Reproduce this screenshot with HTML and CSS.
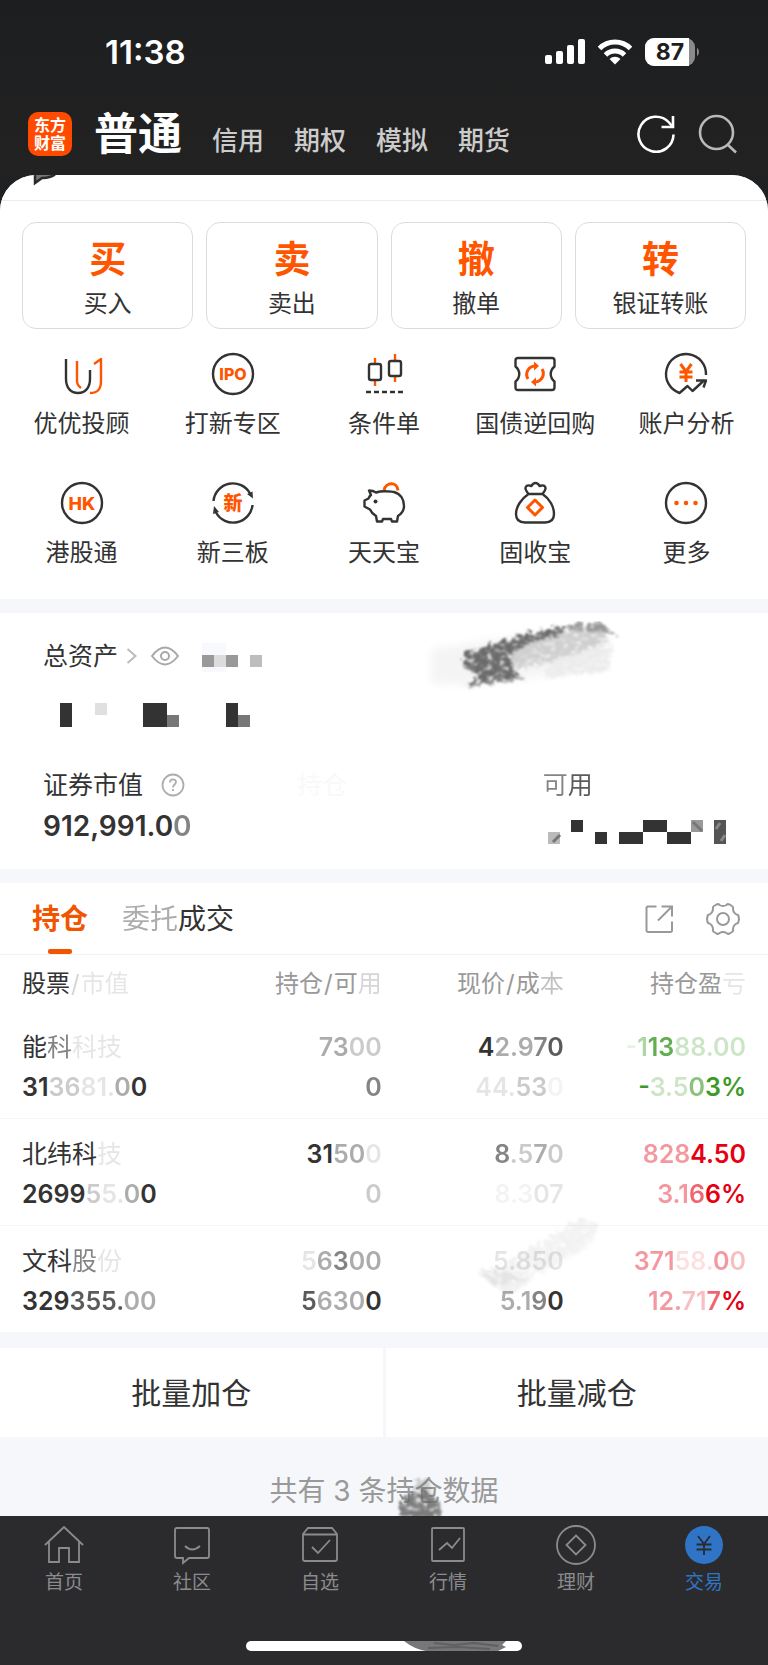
FILE: index.html
```html
<!DOCTYPE html>
<html lang="zh-CN">
<head>
<meta charset="utf-8">
<meta name="viewport" content="width=device-width, initial-scale=1">
<title>交易</title>
<link rel="stylesheet" href="styles.css">
</head>
<body>
<div class="app">
  <header class="top">
    <div class="status">
      <span class="clock">11:38</span>
      <div class="status-icons">
        <svg width="40" height="26" viewBox="0 0 40 26" fill="#fff"><rect x="0" y="16" width="7" height="9" rx="2"/><rect x="11" y="12" width="7" height="13" rx="2"/><rect x="22" y="6" width="7" height="19" rx="2"/><rect x="33" y="0" width="7" height="25" rx="2"/></svg>
        <svg width="36" height="26" viewBox="0 0 36 26" fill="none" stroke="#fff" stroke-width="5"><path d="M2.500 9.500a22 22 0 0 1 31 0"/><path d="M8.500 16a13.500 13.500 0 0 1 19 0"/><path d="M18 25.500l-5.500-5.600a8 8 0 0 1 11 0z" fill="#fff" stroke="none"/></svg>
        <svg width="56" height="28" viewBox="0 0 56 28"><rect width="50" height="28" rx="9" fill="#8a8a8c"/><path d="M9 0h35v28H9a9 9 0 0 1-9-9V9a9 9 0 0 1 9-9z" fill="#fff"/><path d="M52 9.500q4 4.500 0 9z" fill="#8a8a8c"/><text class="battery-text" x="25" y="22" text-anchor="middle">87</text></svg>
      </div>
    </div>
    <div class="brand-row">
      <div class="logo">东方<br>财富</div>
      <nav class="accounts">
        <a class="account account-on" href="#">普通</a>
        <a class="account" href="#">信用</a>
        <a class="account" href="#">期权</a>
        <a class="account" href="#">模拟</a>
        <a class="account" href="#">期货</a>
      </nav>
      <div class="top-actions">
        <button class="icon-btn" type="button" aria-label="刷新"><svg width="40" height="40" viewBox="0 0 40 40" fill="none" stroke="#fff" stroke-width="2.600"><path d="M37.500 20.500A17.500 17.500 0 1 1 33 8.500L36 12"/><path d="M37 2v11H25.500"/></svg></button>
        <button class="icon-btn" type="button" aria-label="搜索"><svg width="40" height="40" viewBox="0 0 40 40" fill="none" stroke="#b9b9ba" stroke-width="2.600"><circle cx="18.500" cy="18.500" r="16.500"/><path d="M29.500 30.500l8.500 8"/></svg></button>
      </div>
    </div>
  </header>

  <main class="sheet">
    <div class="notice"><svg width="26" height="12" viewBox="0 0 26 12"><path d="M2 0v8l7-5q7 .5 13-3.500" fill="#77777a" stroke="#2b2b2d" stroke-width="2.500"/></svg></div>

    <section class="trade">
      <div class="cards">
        <button class="card" type="button"><span class="card-mark">买</span><span class="card-label">买入</span></button>
        <button class="card" type="button"><span class="card-mark">卖</span><span class="card-label">卖出</span></button>
        <button class="card" type="button"><span class="card-mark">撤</span><span class="card-label">撤单</span></button>
        <button class="card" type="button"><span class="card-mark">转</span><span class="card-label">银证转账</span></button>
      </div>
      <div class="tools">
        <a class="tool" href="#"><svg class="glyph" viewBox="0 0 42 42"><path d="M5 6v20c0 9 5 14 12 14s12-5 12-14v-9"/><path class="hot" d="M16 8v20c0 3 1 5 4 7"/><path class="hot" d="M33 11l7-5v22c0 8-3 12-11 12"/></svg><span>优优投顾</span></a>
        <a class="tool" href="#"><svg class="glyph" viewBox="0 0 42 42"><circle cx="21" cy="21" r="20"/><text class="glyph-text" x="21" y="27" text-anchor="middle">IPO</text></svg><span>打新专区</span></a>
        <a class="tool" href="#"><svg class="glyph" viewBox="0 0 42 42"><path class="hot" d="M12 5v6M12 27v6M32 1v7M32 23v6"/><rect x="6" y="11" width="12" height="16" rx="2"/><rect x="26" y="8" width="12" height="15" rx="2"/><path d="M3 39h37" stroke-dasharray="5 3"/></svg><span>条件单</span></a>
        <a class="tool" href="#"><svg class="glyph" viewBox="0 0 42 42"><path d="M4 5h34q2.500 0 2.500 2.500v6c-5 4-5 11 0 15v6q0 2.500-2.500 2.500H4q-2.500 0-2.500-2.500v-6c5-4 5-11 0-15v-6Q1.500 5 4 5z"/><path class="hot" d="M14 26A8.500 8.500 0 0 1 21 13h2M28 16A8.500 8.500 0 0 1 21 29h-2" stroke-width="3"/><path class="hot-fill" d="M20 8.500l5 4.500-5 4.500zM22 24.500l-5 4.500 5 4.500z"/></svg><span>国债逆回购</span></a>
        <a class="tool" href="#"><svg class="glyph" viewBox="0 0 42 42"><path d="M41 22A20 20 0 1 0 14.500 40l8-7 5 5 12-11M31 27.500h10l-2.500 7"/><path class="hot" d="M15.500 11l5.500 7.500 5.500-7.500M21 18.500V29M14.500 19h13M14.500 24h13" stroke-width="3"/></svg><span>账户分析</span></a>
        <a class="tool" href="#"><svg class="glyph" viewBox="0 0 42 42"><circle cx="21" cy="21" r="20"/><text class="glyph-text glyph-hk" x="21" y="28" text-anchor="middle">HK</text></svg><span>港股通</span></a>
        <a class="tool" href="#"><svg class="glyph" viewBox="0 0 42 42"><path d="M1.500 19A19.500 19.500 0 0 1 38 11.500M40.500 23A19.500 19.500 0 0 1 4 30.500"/><path class="ink-fill" d="M35 12l5.500-2.500.5 7zM7 30l-6 2 1-8z"/><text class="glyph-text glyph-new" x="21" y="28" text-anchor="middle">新</text></svg><span>新三板</span></a>
        <a class="tool" href="#"><svg class="glyph" viewBox="0 0 42 42"><path class="hot" d="M21 8c2-8 13-9 14 .500" stroke-width="3"/><path d="M6 8.500q4 0 7 2c7-2.500 13-1 18-.5 7 2 10 8 10 14 0 4-3 8-6 10l-1 5.500h-5l-1-2.500h-8l-1 2.500h-5l-1-5.500c-3-2-5-4-6-6.500l-5.500-3v-6l4-2q1-2.500 2.500-3.500z"/><circle class="ink-fill" cx="12.500" cy="19.500" r="2"/></svg><span>天天宝</span></a>
        <a class="tool" href="#"><svg class="glyph" viewBox="0 0 42 42"><path d="M14.500 12c-3-4-4-6-2-8 2-1.500 4 0 5 0 2-4 6-4 8 0 1 0 3-1.500 5 0 2 2 1 4-2 8zM14.500 12C7 17 2 25 2 32c0 6 3 8.500 9 8.500h20c6 0 9-2.500 9-8.500 0-7-4-15-11.500-20"/><path class="hot" d="M21 18l7.500 7.500-7.500 7.500-7.500-7.500z" stroke-width="3"/></svg><span>固收宝</span></a>
        <a class="tool" href="#"><svg class="glyph" viewBox="0 0 42 42"><circle cx="21" cy="21" r="20"/><g class="hot-fill"><circle cx="11.500" cy="21" r="2.300"/><circle cx="21" cy="21" r="2.300"/><circle cx="30.500" cy="21" r="2.300"/></g></svg><span>更多</span></a>
      </div>
    </section>

    <section class="assets">
      <div class="asset-head">
        <a class="asset-title" href="#">总资产<svg width="12" height="18" viewBox="0 0 12 18" fill="none" stroke="#bcbcbc" stroke-width="2"><path d="M1.500 2l8 7-8 7"/></svg></a>
        <button class="icon-btn" type="button" aria-label="显示或隐藏"><svg width="28" height="20" viewBox="0 0 28 20" fill="none" stroke="#a8a8a8" stroke-width="2"><path d="M1 10Q14-7 27 10 14 27 1 10z"/><circle cx="14" cy="10" r="4"/></svg></button>
        <svg class="mosaic-small" width="60" height="32" viewBox="0 0 60 32"><path fill="#f8f9fc" d="M0 3h24v29H0z"/><path fill="#999" d="M0 15h12v12H0zM24 15h12v12H24z"/><path fill="#dcdcde" d="M12 15h12v12H12z"/><path fill="#bdbdbd" d="M48 15h12v12H48z"/></svg>
      </div>
      <svg class="mosaic" width="210" height="24" viewBox="0 0 210 24"><path fill="#333" d="M17 0h12v24H17zM100 0h24v24h-24zM183 0h12v24h-12z"/><path fill="#777" d="M124 12h12v12h-12zM195 12h12v12h-12z"/><path fill="#e0e0e0" d="M52 0h12v12H52z"/></svg>
      <div class="asset-grid">
        <div class="asset">
          <span class="asset-label">证券市值<svg width="24" height="24" viewBox="0 0 24 24" fill="none" stroke="#adadad" stroke-width="1.800"><circle cx="12" cy="12" r="10.500"/><path d="M9 9.500c0-4 6-4 6-.5 0 2.500-3 2.500-3 5.500M12 16v2"/></svg></span>
          <strong class="asset-value">912,991.0<span class="s2">0</span></strong>
        </div>
        <div class="asset"><span class="asset-label ghost">持仓</span></div>
        <div class="asset">
          <span><span class="s2">可</span><span class="s1">用</span></span>
          <svg class="mosaic-cash" width="184" height="24" viewBox="0 0 184 24"><path fill="#333" d="M28 0h12v12H28zM52 12h12v12H52zM76 12h24v12H76zM100 0h24v12h-24zM124 12h24v12h-24z"/><path fill="#bbb" d="M5 12h12v12H5z"/><path fill="#999" d="M148 0h12v12h-12z"/><path fill="#555" d="M171 0h12v24h-12z"/><path d="M10 22l7-7M150 2l9 9" stroke="#777" stroke-width="3"/><path d="M173 9l4-6M178 21l4-6" stroke="#888" stroke-width="3"/></svg>
        </div>
      </div>
      <svg class="smear smear-assets" width="210" height="80" viewBox="0 0 210 80">
        <defs>
          <filter id="chalk" x="-10%" y="-10%" width="120%" height="120%"><feTurbulence type="fractalNoise" baseFrequency=".16 .24" numOctaves="3" seed="4" result="n"/><feDisplacementMap in="SourceGraphic" in2="n" scale="12" result="d"/><feColorMatrix in="n" type="matrix" values="0 0 0 0 0 0 0 0 0 0 0 0 0 0 0 0 0 0 3 -.55" result="m"/><feComposite in="d" in2="m" operator="in"/><feGaussianBlur stdDeviation=".8"/></filter>
          <filter id="haze" x="-10%" y="-20%" width="120%" height="140%"><feGaussianBlur stdDeviation="4"/></filter>
        </defs>
        <path filter="url(#haze)" fill="#f4f4f4" d="M12 28l48-7 60-9 70 0-6 32-70 12-60 8-42-2z"/>
        <g filter="url(#chalk)"><path fill="#cfcfcf" d="M64 34l80-23 40-2 6 12-46 18-78 16z"/><path fill="#ececec" d="M136 38l58-14-4 26-66 8z"/><path fill="#6a6a6a" d="M46 32l54-17 50-11-10 12-34 8-14 14 4 12 10 8-58 8 12-12-16-8z"/><path fill="#999" d="M148 4l34-2 18 14-14-4-36-2z"/></g>
      </svg>
    </section>

    <section class="positions">
      <div class="tabs">
        <button class="tab tab-on" type="button">持仓</button>
        <button class="tab" type="button"><span class="s3">委托</span>成交</button>
        <div class="tab-actions">
          <button class="icon-btn" type="button" aria-label="分享"><svg width="30" height="30" viewBox="0 0 30 30" fill="none" stroke="#999" stroke-width="2"><path d="M12.500 2.500H4A1.500 1.500 0 0 0 2.500 4v22.500A1.500 1.500 0 0 0 4 28h22.500a1.500 1.500 0 0 0 1.500-1.500v-9M17.500 2.500H28v10M28 2.500L14 16.500"/></svg></button>
          <button class="icon-btn" type="button" aria-label="设置"><svg width="34" height="34" viewBox="0 0 34 34" fill="none" stroke="#999" stroke-width="2" stroke-linejoin="round"><path d="M10.500 2.500q2-1 3 .5 3.500 2 7 0 1-1.500 3-.5l2.500 1.500q1.500 1 1 2.500 0 4 3.500 6 2 0 2 2l.5 2.500-.5 2.500q0 2-2 2-3.500 2-3.500 6 .5 1.500-1 2.500L23.500 31.500q-2 1-3-.5-3.500-2-7 0-1 1.500-3 .5L8 30q-1.500-1-1-2.500 0-4-3.500-6-2 0-2-2L1 17l.5-2.500q0-2 2-2 3.500-2 3.500-6Q6.500 5 8 4z"/><circle cx="17" cy="17" r="6"/></svg></button>
        </div>
      </div>
      <table class="holdings">
        <colgroup><col class="c-name"><col class="c-qty"><col class="c-price"><col class="c-gain"></colgroup>
        <thead>
          <tr><th><span class="dark">股票</span><span class="slash s3">/</span><span class="s4">市值</span></th><th>持仓<span class="slash">/</span>可<span class="s3">用</span></th><th>现价<span class="slash">/</span>成<span class="s2">本</span></th><th>持仓盈<span class="s4">亏</span></th></tr>
        </thead>
        <tbody>
          <tr>
            <td><span class="name">能<span class="s2">科</span><span class="s5">科技</span></span><span class="num">31<span class="s4">36</span><span class="s5">81.</span><span class="s3">0</span>0</span></td>
            <td><span class="num"><span class="s3">73</span><span class="s4">00</span></span><span class="num s2">0</span></td>
            <td><span class="num">4<span class="s3">2.9</span><span class="s2">7</span><span class="s1">0</span></span><span class="num"><span class="s5">44.</span><span class="s4">53</span><span class="s6">0</span></span></td>
            <td class="down"><span class="num"><span class="s5">-</span><span class="s3">1</span><span class="s1">13</span><span class="s4">88.00</span></span><span class="num">-<span class="s4">3.5</span><span class="s2">0</span>3%</span></td>
          </tr>
          <tr>
            <td><span class="name">北纬科<span class="s5">技</span></span><span class="num">2699<span class="s4">5</span><span class="s5">5.</span><span class="s3">0</span>0</span></td>
            <td><span class="num">31<span class="s3">50</span><span class="s5">0</span></span><span class="num s4">0</span></td>
            <td><span class="num"><span class="s2">8</span><span class="s4">.5</span><span class="s3">7</span><span class="s4">0</span></span><span class="num"><span class="s6">8.3</span><span class="s5">07</span></span></td>
            <td class="up"><span class="num"><span class="s3">828</span>4.50</span><span class="num"><span class="s3">3.1</span><span class="s2">6</span>6%</span></td>
          </tr>
          <tr>
            <td><span class="name">文科<span class="s2">股</span><span class="s5">份</span></span><span class="num">329<span class="s1">355.</span><span class="s3">00</span></span></td>
            <td><span class="num"><span class="s5">5</span><span class="s3">6</span><span class="s2">3</span><span class="s3">00</span></span><span class="num"><span class="s1">5</span><span class="s3">630</span>0</span></td>
            <td><span class="num s5">5.850</span><span class="num"><span class="s3">5.</span><span class="s3">1</span><span class="s2">9</span>0</span></td>
            <td class="up"><span class="num"><span class="s3">371</span><span class="s5">58.</span><span class="s3">0</span><span class="s4">0</span></span><span class="num"><span class="s3">12.</span><span class="s4">71</span><span class="s2">7</span>%</span></td>
          </tr>
        </tbody>
      </table>
      <svg class="smear smear-table" width="134" height="90" viewBox="0 0 134 90"><g filter="url(#chalk)"><path fill="#000" fill-opacity=".05" d="M34 54L108 8l20 6-10 22-62 34-34 8-16-16z"/><path fill="#000" fill-opacity=".06" d="M6 64l18-4 20 6 16 4-24 16z"/></g></svg>
    </section>

    <div class="batch">
      <button class="batch-btn" type="button">批量加仓</button>
      <button class="batch-btn" type="button">批量减仓</button>
    </div>
    <p class="total">共有 3 条持仓数据<svg class="smear smear-total" width="48" height="44" viewBox="0 0 48 44"><g filter="url(#chalk)"><path fill="#666" fill-opacity=".85" d="M4 48V28l12-8 14-4 14 12 2 20z"/><path fill="#666" fill-opacity=".3" d="M16 20l6-14 10-2 6 18z"/></g></svg></p>
  </main>

  <footer class="bottom">
    <nav class="nav">
      <a class="nav-item" href="#"><svg class="nav-icon" viewBox="0 0 40 40"><path d="M1 20L20 2l19 18M5 16.500V37h10V23h10v14h10V16.500"/></svg><span>首页</span></a>
      <a class="nav-item" href="#"><svg class="nav-icon" viewBox="0 0 40 40"><path d="M5 3h30q2 0 2 2v26q0 2-2 2H17l-6 5v-5H5q-2 0-2-2V5q0-2 2-2zM13 21q7 7 15 0"/></svg><span>社区</span></a>
      <a class="nav-item" href="#"><svg class="nav-icon" viewBox="0 0 40 40"><path d="M8 3h24l5 6v25q0 2-2 2H5q-2 0-2-2V9zM3 9.500h34M12 22l6 6 12-13"/></svg><span>自选</span></a>
      <a class="nav-item" href="#"><svg class="nav-icon" viewBox="0 0 40 40"><path d="M5 3h30q1 0 1 1v31q0 1-1 1H5q-1 0-1-1V4q0-1 1-1zM11 25l8-7 5 5 8-10"/></svg><span>行情</span></a>
      <a class="nav-item" href="#"><svg class="nav-icon" viewBox="0 0 40 40"><circle cx="20" cy="20" r="19"/><path d="M20 10.500l9.500 9.500-9.500 9.500-9.500-9.500z"/></svg><span>理财</span></a>
      <a class="nav-item nav-on" href="#"><svg class="nav-icon" viewBox="0 0 40 40"><circle cx="20" cy="20" r="19" fill="#2f74c6" stroke="none"/><path d="M14 11l6 8 6-8M20 19v11M12.500 19.500h15M12.500 24.500h15" stroke="#2b2b2d"/></svg><span>交易</span></a>
    </nav>
    <div class="home-bar"><svg class="smear smear-home" width="112" height="10" viewBox="0 0 112 10"><path fill="#777" d="M0 0h102l-4 4 4 2-8 4H22Q10 8 0 0z"/><path d="M30 2l20 2 20-2 24 3M24 7l30-1 32 2" stroke="#606060" stroke-width="2" fill="none"/></svg></div>
  </footer>
</div>
</body>
</html>
```

FILE: styles.css
```css
* { box-sizing: border-box; }

body {
  margin: 0;
  background: #2b2b2d;
  color: #333;
  font-family: Inter, "Noto Sans CJK SC", sans-serif;
  font-size: 24px;
  line-height: 32px;
}

a { color: inherit; text-decoration: none; }
button { margin: 0; padding: 0; border: 0; background: none; color: inherit; font: inherit; cursor: pointer; }
svg { display: block; flex: none; }

.app { background: #202123; }

/* Status bar and account switcher */
.top { background: linear-gradient(#1d1e20, #222222); padding-bottom: 11px; }
.status { display: flex; align-items: center; justify-content: space-between; height: 104px; padding: 0 67px 0 105px; }
.clock { color: #fff; font-size: 33px; font-weight: 600; }
.status-icons { display: flex; align-items: center; gap: 12px; }
.battery-text { font: 700 23px Inter, sans-serif; fill: #1d1e20; }
.brand-row { display: flex; align-items: center; height: 60px; padding: 0 30px 0 28px; }
.logo { flex: none; width: 44px; height: 44px; padding-top: 4px; border-radius: 10px; background: #ff4a00; color: #fff; font-size: 16px; font-weight: 700; line-height: 18px; text-align: center; }
.accounts { display: flex; align-items: baseline; gap: 30px; margin-left: 22px; }
.account { color: #ccc; font-size: 26px; font-weight: 500; white-space: nowrap; }
.account-on { color: #fff; font-size: 44px; font-weight: 700; line-height: 60px; }
.top-actions { display: flex; gap: 22px; margin-left: auto; }
.icon-btn { display: flex; }

/* White sheet */
.sheet { overflow: hidden; border-radius: 36px 36px 0 0; background: #f5f7fa; }
.notice { height: 26px; padding-left: 33px; border-bottom: 1px solid #ececec; background: #fff; }
.trade { padding: 21px 22px 30px; background: #fff; }
.cards { display: grid; grid-template-columns: repeat(4, 1fr); gap: 13px; }
.card { display: flex; flex-direction: column; align-items: center; gap: 6px; height: 107px; padding-top: 15px; border: 1px solid #dcdcdc; border-radius: 14px; }
.card-mark { color: #ff5500; font-size: 37px; font-weight: 700; line-height: 44px; }
.tools { display: grid; grid-template-columns: repeat(5, 1fr); row-gap: 42px; margin: 24px -16px 0; }
.tool { display: flex; flex-direction: column; align-items: center; gap: 13px; white-space: nowrap; }
.glyph { width: 42px; height: 42px; overflow: visible; fill: none; stroke: #333; stroke-width: 2.4; stroke-linejoin: round; }
.glyph .hot { stroke: #ff5500; }
.glyph .hot-fill { fill: #ff5500; stroke: none; }
.glyph .ink-fill { fill: #333; stroke: none; }
.glyph-text { font: 800 16px Inter, "Noto Sans CJK SC", sans-serif; fill: #ff5500; stroke: none; }
.glyph-hk { font-size: 18px; }
.glyph-new { font-size: 19px; }

/* Assets */
.assets { position: relative; margin-top: 14px; padding: 27px 0 25px 43px; background: #fff; font-size: 25px; }
.asset-head { display: flex; align-items: center; height: 32px; }
.asset-title { display: flex; align-items: center; gap: 8px; margin-right: 13px; }
.mosaic-small { margin-left: 23px; }
.mosaic { margin: 31px 0 42px; }
.asset-grid { display: grid; grid-template-columns: 254fr 245fr 225fr; }
.asset { display: flex; flex-direction: column; gap: 7px; }
.asset-label { display: flex; align-items: center; gap: 18px; }
.asset-value { font-size: 28px; font-weight: 600; line-height: 36px; }
.mosaic-cash { margin-top: 12px; }
.ghost { color: #f9f9f9; }

/* Brush marks lying over the content */
.smear { position: absolute; pointer-events: none; }
.smear-assets { top: 8px; left: 54.5%; }
.smear-table { right: 162px; bottom: 32px; }
.smear-total { bottom: -2px; left: 51.500%; }
.smear-home { top: 0; right: 6px; }

/* Positions */
.positions { position: relative; margin-top: 14px; background: #fff; }
.tabs { display: flex; align-items: stretch; gap: 34px; height: 72px; padding: 0 28px 0 32px; border-bottom: 1px solid #f3f3f3; }
.tab { position: relative; font-size: 28px; }
.tab-on { color: #f25500; font-weight: 700; }
.tab-on::after { content: ""; position: absolute; bottom: 0; left: 50%; width: 24px; height: 5px; margin-left: -12px; border-radius: 2px; background: #f25500; }
.tab-actions { display: flex; align-items: center; gap: 32px; margin-left: auto; }
.holdings { width: 100%; border-collapse: collapse; table-layout: fixed; }
.c-name { width: 26%; }
.c-qty, .c-price { width: 23.7%; }
.holdings th { height: 57px; padding: 0; color: #999; font-weight: 400; text-align: right; white-space: nowrap; }
.slash { margin: 0 1px; }
.holdings td { padding: 15px 0 11px; text-align: right; white-space: nowrap; }
.holdings th:first-child, .holdings td:first-child { padding-left: 22px; text-align: left; }
.holdings th:last-child, .holdings td:last-child { padding-right: 22px; }
.holdings tbody tr + tr { border-top: 1px solid #f5f5f5; }
.name, .num { display: block; line-height: 40px; }
.name { font-size: 25px; }
.num { font-size: 25px; font-weight: 600; }
.dark { color: #333; }
.down { color: #3d9a25; }
.up { color: #e60012; }
.s1 { opacity: .8; }
.s2 { opacity: .6; }
.s3 { opacity: .4; }
.s4 { opacity: .25; }
.s5 { opacity: .12; }
.s6 { opacity: .05; }

.batch { display: grid; grid-template-columns: 1fr 1fr; gap: 3px; margin-top: 16px; }
.batch-btn { height: 89px; background: #fff; font-size: 30px; }
.total { position: relative; margin: 0; padding: 34px 0 5px; color: #999; font-size: 28px; line-height: 40px; text-align: center; }

/* Bottom navigation */
.bottom { padding: 9px 0 14px; background: #2b2b2d; }
.nav { display: grid; grid-template-columns: repeat(6, 1fr); }
.nav-item { display: flex; flex-direction: column; align-items: center; gap: 4px; color: #8b8b8f; font-size: 19px; line-height: 28px; }
.nav-icon { width: 40px; height: 40px; fill: none; stroke: #8b8b8f; stroke-width: 1.800; }
.nav-on { color: #2f74c6; }
.home-bar { position: relative; width: 36%; height: 10px; margin: 44px auto 0; overflow: hidden; border-radius: 5px; background: #fff; }
```
